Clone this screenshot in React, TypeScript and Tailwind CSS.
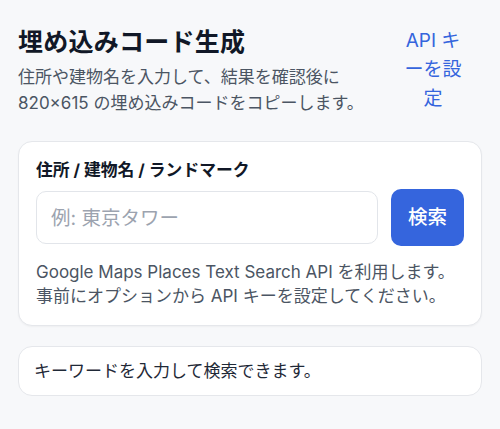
export default function App() {
  return (
    <div
      className="min-h-screen bg-[#f7f8fa] px-[18px] pt-[26px] pb-8 text-[#111827]"
      style={{ fontFamily: 'Inter, "Noto Sans CJK JP", sans-serif' }}
    >
      <header className="flex items-start justify-between">
        <div className="flex-1">
          <h1 className="text-[25px] font-bold leading-[32px] tracking-[0.01em]">埋め込みコード生成</h1>
          <p className="mt-[6px] text-[17px] leading-[26px] text-[#4b5563]">
            住所や建物名を入力して、結果を確認後に
            <br />
            820×615 の埋め込みコードをコピーします。
          </p>
        </div>
        <button
          type="button"
          className="w-[98px] shrink-0 px-[19px] text-center text-[19px] leading-[29px] text-[#3565dd] [line-break:anywhere]"
        >
          API キーを設定
        </button>
      </header>

      <section className="mt-[25px] rounded-[14px] border border-[#e5e7eb] bg-white p-[17px] shadow-[0_1px_2px_rgba(0,0,0,0.04)]">
        <label htmlFor="query" className="block text-[16.8px] font-bold leading-[22px]">
          住所 / 建物名 / ランドマーク
        </label>
        <div className="mt-[8px] flex items-center gap-[13px]">
          <input
            id="query"
            type="text"
            placeholder="例: 東京タワー"
            className="h-[53px] min-w-0 flex-1 rounded-[10px] border border-[#e2e5ea] px-[14px] text-[19.5px] outline-none placeholder:text-[#9ca3af]"
          />
          <button
            type="button"
            className="h-[57px] w-[73px] shrink-0 rounded-[10px] bg-[#3565dd] text-[19.5px] font-medium text-white"
          >
            検索
          </button>
        </div>
        <p className="mt-[14px] text-[17px] leading-[24px] text-[#4b5563]">
          Google Maps Places Text Search API を利用します。
          <br />
          事前にオプションから API キーを設定してください。
        </p>
      </section>

      <section className="mt-[20px] rounded-[14px] border border-[#e5e7eb] bg-white px-[15px] py-[12px] text-[17px] leading-[24px] text-[#1f2937]">
        キーワードを入力して検索できます。
      </section>
    </div>
  )
}
